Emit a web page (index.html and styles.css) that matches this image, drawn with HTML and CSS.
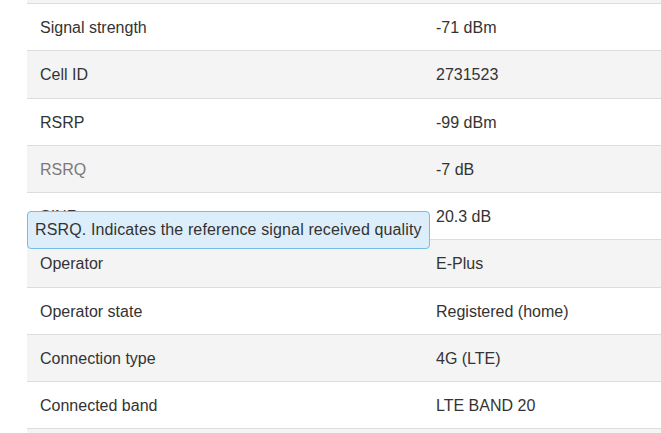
FILE: index.html
```html
<!DOCTYPE html>
<html>
<head>
<meta charset="utf-8">
<link rel="stylesheet" href="styles.css">
</head>
<body>
<div class="panel">
  <table class="info">
    <colgroup><col class="c1"><col class="c2"></colgroup>
    <tbody>
      <tr><td>&nbsp;</td><td>&nbsp;</td></tr>
      <tr><td>Signal strength</td><td>-71 dBm</td></tr>
      <tr><td>Cell ID</td><td>2731523</td></tr>
      <tr><td>RSRP</td><td>-99 dBm</td></tr>
      <tr><td class="hovered">RSRQ</td><td>-7 dB</td></tr>
      <tr><td>SINR</td><td>20.3 dB</td></tr>
      <tr><td>Operator</td><td>E-Plus</td></tr>
      <tr><td>Operator state</td><td>Registered (home)</td></tr>
      <tr><td>Connection type</td><td>4G (LTE)</td></tr>
      <tr><td>Connected band</td><td>LTE BAND 20</td></tr>
      <tr><td>&nbsp;</td><td>&nbsp;</td></tr>
    </tbody>
  </table>
  <div class="tooltip">RSRQ. Indicates the reference signal received quality</div>
</div>
</body>
</html>
```
FILE: styles.css
```css
html, body {
  margin: 0;
  padding: 0;
  background: #fff;
  overflow: hidden;
}
body {
  width: 661px;
  height: 433px;
  font-family: "Liberation Sans", Arial, sans-serif;
  font-size: 16px;
  color: #333;
}
.panel {
  position: relative;
  display: flow-root;
  padding-left: 27px;
  height: 433px;
  overflow: hidden;
}
.info {
  border-collapse: collapse;
  table-layout: fixed;
  width: 800px;
  margin-top: -44px;
}
.c1 { width: 396px; }
.info td {
  border-top: 1px solid #dddddd;
  padding: 13px 13px 11px;
  line-height: 22.22px;
  white-space: nowrap;
}
.info tr:nth-child(odd) td {
  background: #f4f4f4;
}
.info td.hovered {
  color: #7a7a7a;
}
.tooltip {
  position: absolute;
  left: 27px;
  top: 211px;
  padding: 7px 7px;
  line-height: 22px;
  white-space: nowrap;
  letter-spacing: 0.13px;
  background: #ddeefb;
  border: 1px solid #74bde6;
  border-radius: 4px;
  color: #333;
}
```
